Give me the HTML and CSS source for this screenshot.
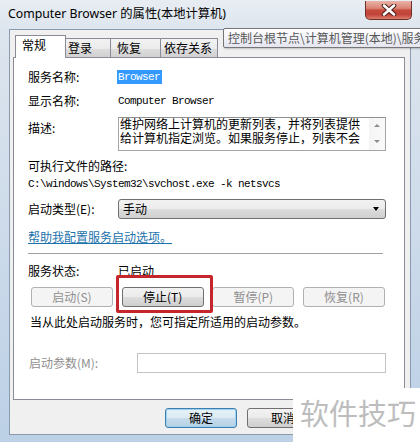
FILE: index.html
```html
<!DOCTYPE html>
<html>
<head>
<meta charset="utf-8">
<title>Computer Browser 的属性</title>
<link rel="stylesheet" href="styles.css">
</head>
<body>
<div class="window">
  <div class="titlebar">
    <div class="title">Computer Browser 的属性(本地计算机)</div>
    <div class="close">
      <svg width="16" height="12" viewBox="0 0 16 12"><path d="M3 1.5 L13 10.5 M13 1.5 L3 10.5" stroke="#4a1f1a" stroke-width="4.6" stroke-linecap="round"/><path d="M3 1.5 L13 10.5 M13 1.5 L3 10.5" stroke="#ffffff" stroke-width="2.6" stroke-linecap="round"/></svg>
    </div>
  </div>
  <div class="frame-body">
    <div class="client">
      <div class="tabs">
        <div class="tab active t1">常规</div>
        <div class="tab t2">登录</div>
        <div class="tab t3">恢复</div>
        <div class="tab t4">依存关系</div>
      </div>
      <div class="panel">
        <div class="row r1"><span class="label">服务名称:</span><span class="mono sel">Browser</span></div>
        <div class="row r2"><span class="label">显示名称:</span><span class="mono">Computer Browser</span></div>
        <div class="row r3">
          <span class="label desc-label">描述:</span>
          <div class="textarea">
            <div class="ta-text">维护网络上计算机的更新列表，并将列表提供<br>给计算机指定浏览。如果服务停止，列表不会</div>
            <div class="ta-scroll"><span class="up"></span><span class="down"></span></div>
          </div>
        </div>
        <div class="line r4">可执行文件的路径:</div>
        <div class="line mono r5">C:\windows\System32\svchost.exe -k netsvcs</div>
        <div class="row r6">
          <span class="label">启动类型(E):</span>
          <div class="select"><span>手动</span><span class="arrow"></span></div>
        </div>
        <div class="line r7"><span class="link">帮助我配置服务启动选项。</span></div>
        <div class="sep"></div>
        <div class="row r8"><span class="label">服务状态:</span><span>已启动</span></div>
        <div class="btnrow">
          <div class="btn disabled">启动(S)</div>
          <div class="btn">停止(T)</div>
          <div class="btn disabled">暂停(P)</div>
          <div class="btn disabled">恢复(R)</div>
        </div>
        <div class="line r9">当从此处启动服务时，您可指定所适用的启动参数。</div>
        <div class="row r10"><span class="label param-label">启动参数(M):</span><div class="input"></div></div>
      </div>
      <div class="footer">
        <div class="btn default">确定</div>
        <div class="btn">取消</div>
        <div class="btn disabled">应用(A)</div>
      </div>
    </div>
  </div>
  <div class="tooltip">控制台根节点\计算机管理(本地)\服务</div>
  <div class="highlight"></div>
  <div class="watermark">软件技巧</div>
</div>
</body>
</html>
```
FILE: styles.css
```css
* { box-sizing: border-box; }
html, body { margin: 0; padding: 0; }
body {
  width: 420px;
  height: 442px;
  overflow: hidden;
  font-family: "Noto Sans CJK SC", "Noto Sans", sans-serif;
  font-size: 12px;
  line-height: 16px;
  color: #000;
}
.window {
  position: relative;
  width: 420px;
  height: 442px;
  display: flex;
  flex-direction: column;
  background: linear-gradient(to right, #a9c2de 0px, #c9d8ea 6px, #dfe7f0 40%, #e4eaf1 70%, #c9d8ea 100%);
}
.titlebar {
  height: 29px;
  display: flex;
  justify-content: space-between;
  align-items: flex-start;
  background: linear-gradient(to bottom, #e8edf3, #dde5ee);
}
.title {
  padding: 6px 0 0 8px;
  font-family: "Noto Sans", "Noto Sans CJK SC", sans-serif;
  font-size: 12.3px;
  line-height: 16px;
  color: #000;
}
.close {
  margin: 1px 8px 0 0;
  width: 47px;
  height: 19px;
  border: 1px solid #6d302a;
  border-top: none;
  border-radius: 0 0 5px 5px;
  background: linear-gradient(to bottom, #eab3a6 0%, #db8576 40%, #c5493b 52%, #c2443a 75%, #de7c69 100%);
  display: flex;
  align-items: center;
  justify-content: center;
}
.frame-body {
  flex: 1;
  padding: 0 9px 7px 9px;
  display: flex;
  background: linear-gradient(to bottom, #dde5ee, #bcd0e6);
}
.client {
  flex: 1;
  border: 1px solid #8a9bb0;
  background: #f0f0f0;
  padding: 5px 5px 0 3px;
  display: flex;
  flex-direction: column;
}
.tabs {
  display: flex;
  align-items: flex-end;
  height: 23px;
  margin: 0 0 -1px 2px;
}
.tab {
  height: 20px;
  border: 1px solid #898c95;
  border-bottom: none;
  background: linear-gradient(to bottom, #f3f3f3 0%, #ebebeb 50%, #dddddd 51%, #cfcfcf 100%);
  padding: 1px 0 0 4px;
  line-height: 16px;
  white-space: nowrap;
}
.tab.active {
  position: relative;
  z-index: 1;
  height: 23px;
  background: #fff;
}
.t1 { width: 51px; padding-left: 6px; }
.t2 { width: 46px; margin-left: -1px; padding-left: 2px; }
.t3 { width: 51px; margin-left: -1px; padding-left: 6px; }
.t4 { width: 58px; margin-left: -1px; padding-left: 3px; }

.panel {
  height: 343px;
  border: 1px solid #898c95;
  background: #fff;
  padding: 0 18px 0 14px;
  display: flex;
  flex-direction: column;
}
.row { display: flex; align-items: center; }
.label { width: 90px; flex: none; white-space: nowrap; }
.line { white-space: nowrap; }
.mono {
  font-family: "Liberation Mono", monospace;
  font-size: 11px;
  letter-spacing: -0.6px;
}
.sel {
  display: inline-block;
  background: #3399ff;
  color: #fff;
  line-height: 14px;
  height: 14px;
  padding: 0 2px 0 1px;
  margin-left: -1px;
}
.r1 { margin-top: 11px; height: 16px; }
.r2 { margin-top: 8px; height: 16px; }
.r3 { margin-top: 8px; align-items: flex-start; }
.desc-label { padding-top: 3px; }
.textarea {
  flex: 1;
  height: 34px;
  border: 1px solid #a5a5a5;
  border-top-color: #8e8f8f;
  display: flex;
  background: #fff;
}
.ta-text {
  flex: 1;
  margin-top: -1px;
  padding: 0 0 0 1px;
  line-height: 14px;
  white-space: nowrap;
}
.ta-scroll {
  width: 16px;
  flex: none;
  background: linear-gradient(to right, #f4f4f4, #fafafa);
  display: flex;
  flex-direction: column;
  align-items: center;
  justify-content: space-between;
  padding: 6px 0 7px;
}
.ta-scroll span { width: 0; height: 0; border-left: 3px solid transparent; border-right: 3px solid transparent; }
.ta-scroll .up { border-bottom: 3px solid #8c8c8c; }
.ta-scroll .down { border-top: 3px solid #8c8c8c; }
.r4 { margin-top: 7px; }
.r5 { margin-top: 2px; height: 16px; line-height: 16px; }
.r6 { margin-top: 7px; }
.select {
  flex: 1;
  height: 20px;
  border: 1px solid #707070;
  border-radius: 3px;
  background: linear-gradient(to bottom, #f2f2f2 0%, #ebebeb 50%, #dddddd 51%, #cfcfcf 100%);
  display: flex;
  align-items: center;
  justify-content: space-between;
  padding: 0 6px 0 4px;
}
.arrow {
  width: 0; height: 0;
  border-left: 3.5px solid transparent;
  border-right: 3.5px solid transparent;
  border-top: 4px solid #000;
}
.r7 { margin-top: 10px; }
.link { color: #1d72ac; text-decoration: underline; }
.sep {
  margin: 8px 3px 0 0;
  height: 2px;
  border-top: 1px solid #a0a0a0;
  border-bottom: 1px solid #fff;
}
.r8 { margin-top: 8px; }
.btnrow {
  margin: 8px 1px 0 3px;
  display: flex;
  justify-content: space-between;
}
.btn {
  width: 82px;
  height: 20px;
  border: 1px solid #707070;
  border-radius: 3px;
  background: linear-gradient(to bottom, #f2f2f2 0%, #ebebeb 50%, #dddddd 51%, #cfcfcf 100%);
  text-align: center;
  line-height: 18px;
  white-space: nowrap;
}
.btn.disabled {
  border-color: #adb2b5;
  background: #f4f4f4;
  color: #8f8f8f;
}
.btn.default {
  border-color: #3c7fb1;
  background: linear-gradient(to bottom, #e5f1f8 0%, #dbeaf4 50%, #c7dcec 51%, #b6d0e4 100%);
  box-shadow: inset 0 0 0 1px #9fd0ee;
}
.r9 { margin-top: 7px; padding-left: 2px; }
.r10 { margin-top: 23px; padding-left: 1px; }
.param-label { width: 108px; color: #8f8f8f; }
.input {
  flex: 1;
  height: 20px;
  border: 1px solid #c3c3c3;
  background: #fff;
}
.footer {
  margin-top: 8px;
  display: flex;
  justify-content: flex-end;
  gap: 10px;
  padding-right: 4px;
}
.footer .btn { width: 72px; }

.tooltip {
  position: absolute;
  left: 223px;
  top: 28px;
  width: 210px;
  height: 20px;
  border: 1px solid #767676;
  border-radius: 2px;
  background: linear-gradient(to bottom, #ffffff, #e4e5f0);
  color: #575757;
  padding: 0 0 0 4px;
  font-size: 12px;
  line-height: 18px;
  white-space: nowrap;
  overflow: hidden;
  box-shadow: 1px 1px 2px rgba(0,0,0,0.2);
}
.highlight {
  position: absolute;
  left: 116px;
  top: 275px;
  width: 97px;
  height: 38px;
  border: 3px solid #c4262b;
  border-radius: 2px;
}
.watermark {
  position: absolute;
  left: 293px;
  top: 388px;
  right: 0;
  bottom: 0;
  background: #fff;
  color: #bdbdbd;
  font-size: 29px;
  line-height: 30px;
  padding: 9px 0 0 7px;
  white-space: nowrap;
}
```
